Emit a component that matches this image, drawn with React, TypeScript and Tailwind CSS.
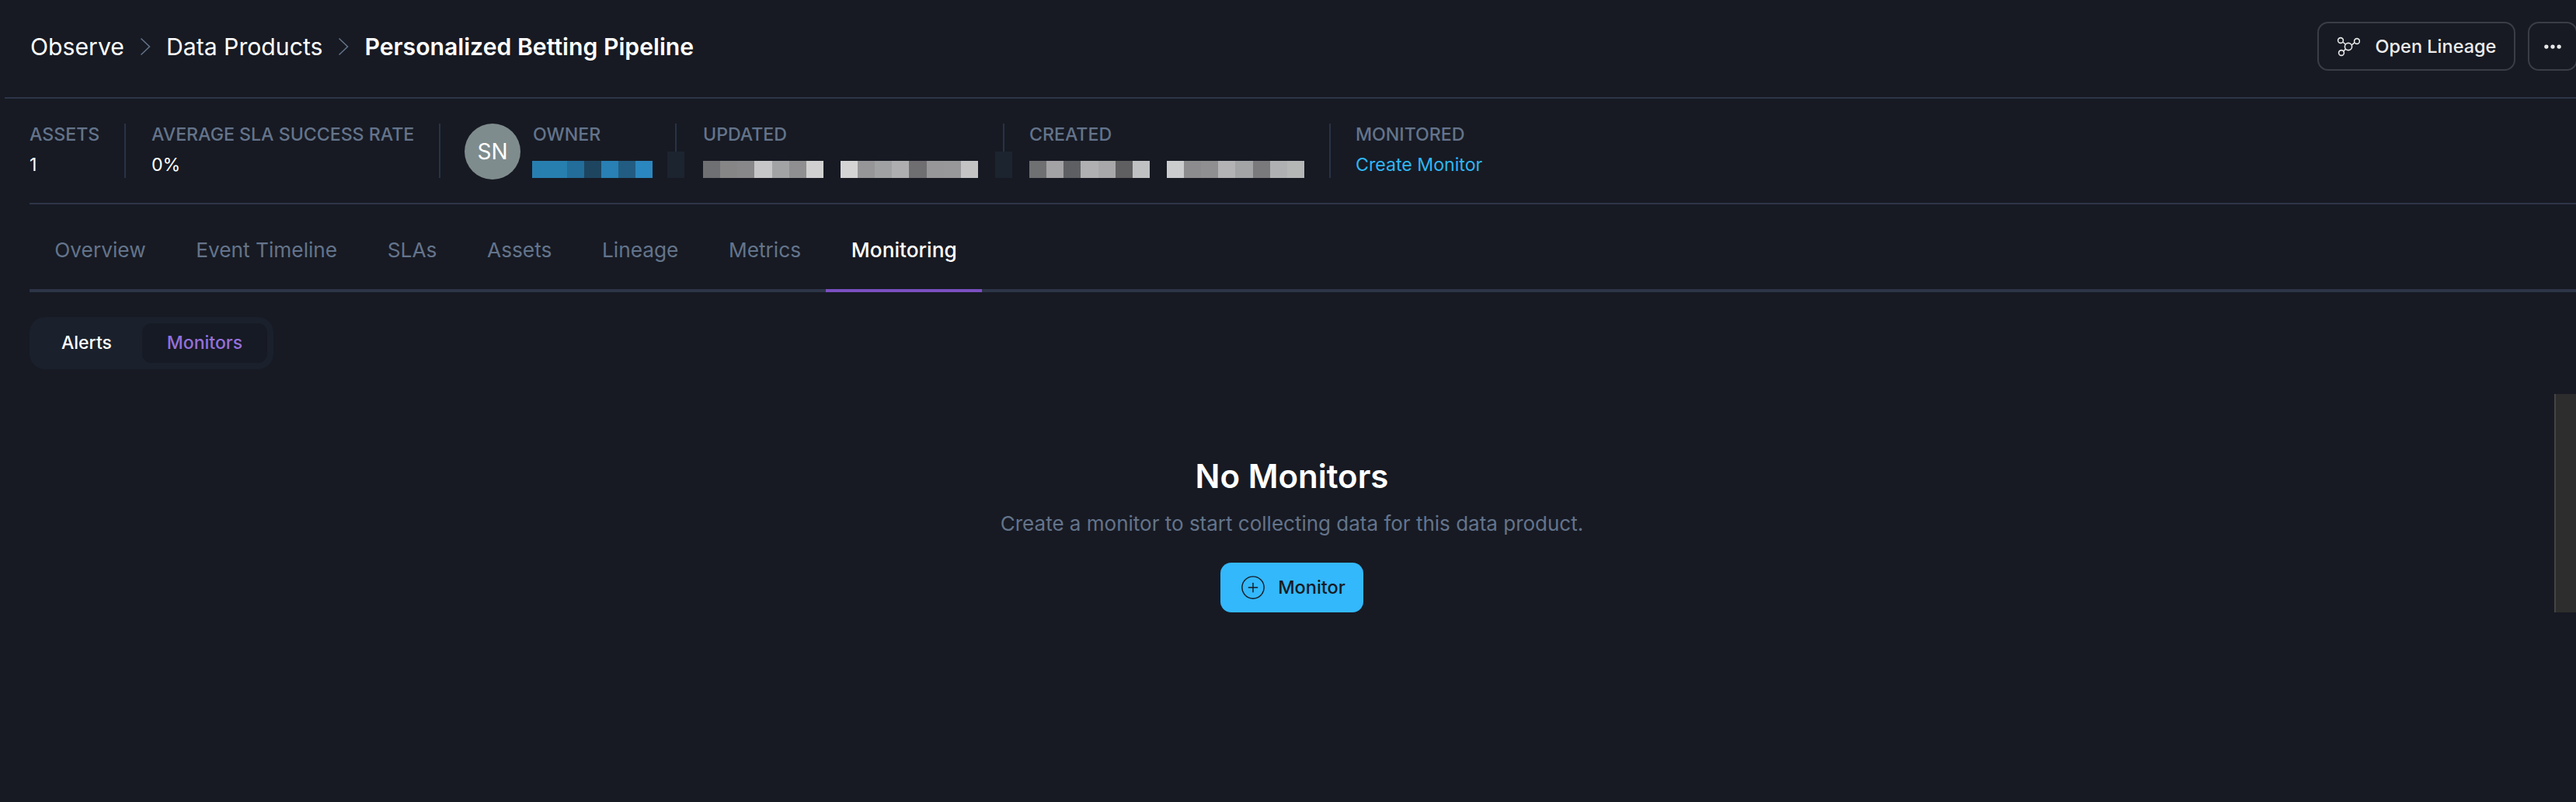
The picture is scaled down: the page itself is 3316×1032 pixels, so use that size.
import { CirclePlus, Ellipsis } from "lucide-react"

const ownerCells = ["w-[45px] bg-[#277fb0]", "w-[22px] bg-[#236d9a]", "w-[22px] bg-[#1d4560]", "w-[22px] bg-[#2880b4]", "w-[22px] bg-[#225c82]", "w-[22px] bg-[#2b87bf]"]
const updatedA = ["bg-[#6f7073]", "bg-[#868687]", "bg-[#88888a]", "bg-[#c6c6c8]", "bg-[#a2a3a5]", "bg-[#8f8f91]", "bg-[#d0d0d0]"]
const updatedB = ["bg-[#d4d4d5]", "bg-[#969698]", "bg-[#a0a1a3]", "bg-[#aeadaf]", "bg-[#6f6e71]", "bg-[#979799]", "bg-[#98989a]", "bg-[#c4c4c5]"]
const createdA = ["bg-[#6f7072]", "bg-[#a3a2a4]", "bg-[#5e5f62]", "bg-[#b0afb1]", "bg-[#a8a7a9]", "bg-[#5f5f61]", "bg-[#c0c1c3]"]
const createdB = ["bg-[#cbccce]", "bg-[#8c8c8e]", "bg-[#8f8e90]", "bg-[#b3b2b4]", "bg-[#a3a4a6]", "bg-[#7a7a7c]", "bg-[#afb0b2]", "bg-[#b5b6b6]"]
const tabs = ["Overview", "Event Timeline", "SLAs", "Assets", "Lineage", "Metrics"]

function Chevron() {
  return (
    <svg width="14" height="24" viewBox="0 0 14 24" fill="none" className="shrink-0">
      <path d="M1.5 1.5 L12.5 12 L1.5 22.5" stroke="#64748b" strokeWidth="1.5" />
    </svg>
  )
}

function LineageIcon() {
  return (
    <svg width="30" height="26" viewBox="0 0 30 26" fill="none" stroke="#e8e8e8" strokeWidth="1.6" className="shrink-0">
      <circle cx="15" cy="13" r="4.6" />
      <circle cx="5" cy="5" r="3.4" />
      <circle cx="26" cy="6" r="3.4" />
      <circle cx="6" cy="21" r="3.4" />
      <path d="M7.7 7 L11.4 10 M23 7.6 L19.4 11 M8.5 19 L11.6 16.2" />
    </svg>
  )
}

function Blur({ cells }: { cells: string[] }) {
  return (
    <div className="flex h-[22px]">
      {cells.map((c, i) => (
        <div key={i} className={"h-full w-[22.14px] " + c} />
      ))}
    </div>
  )
}

function Label({ children }: { children: string }) {
  return <div className="text-[23.15px] leading-[28px] font-medium text-[#64748b]">{children}</div>
}

function Divider({ block }: { block?: boolean }) {
  return (
    <div className="relative w-[2px] shrink-0 bg-[#293245]">
      {block && <div className="absolute left-[-10px] bottom-0 h-[34px] w-[22px] bg-[#1c2430]" />}
    </div>
  )
}

export default function App() {
  return (
    <div className="relative h-[1032px] w-[3316px] overflow-hidden bg-[#171a23] [font-family:Inter,sans-serif] antialiased">
      {/* header */}
      <div className="ml-[6px] flex h-[127px] items-center justify-between border-b-2 border-[#2d3548] pb-[6px] pl-[33px]">
        <div className="flex items-center text-[30.2px] leading-[36px] text-white">
          <span>Observe</span>
          <span className="mx-[20px]"><Chevron /></span>
          <span>Data Products</span>
          <span className="mx-[20px]"><Chevron /></span>
          <span className="font-semibold">Personalized Betting Pipeline</span>
        </div>
        <div className="-mr-[2px] flex items-center gap-[16px]">
          <button className="flex h-[63px] w-[255px] items-center justify-center gap-[20px] rounded-[14px] border-2 border-[#3a3d45] text-[23.5px] font-medium text-[#ececec]">
            <LineageIcon />
            Open Lineage
          </button>
          <button className="flex h-[63px] w-[64px] items-center justify-center rounded-[14px] border-2 border-[#3a3d45] text-[#ececec]">
            <Ellipsis size={28} strokeWidth={2.5} />
          </button>
        </div>
      </div>

      {/* stats */}
      <div className="ml-[38px] flex h-[136px] items-center border-b-2 border-[#2d3548]">
        <div className="flex h-[70px]">
          <div className="w-[122px]">
            <Label>ASSETS</Label>
            <div className="mt-[10px] text-[23.15px] leading-[30px] text-white">1</div>
          </div>
          <Divider />
          <div className="w-[403px] pl-[33px]">
            <Label>AVERAGE SLA SUCCESS RATE</Label>
            <div className="mt-[10px] text-[23.15px] leading-[30px] text-white">0%</div>
          </div>
          <Divider />
          <div className="flex w-[302px] pl-[31px]">
            <div className="flex h-[72px] w-[72px] shrink-0 items-center justify-center rounded-full bg-[#7f8c8d] text-[28px] text-white">SN</div>
            <div className="ml-[15px]">
              <div className="pl-[1px]"><Label>OWNER</Label></div>
              <div className="mt-[20px] flex h-[22px]">
                {ownerCells.map((c, i) => (
                  <div key={i} className={"h-full " + c} />
                ))}
              </div>
            </div>
          </div>
          <Divider block />
          <div className="w-[420px] pl-[34px]">
            <Label>UPDATED</Label>
            <div className="mt-[20px] flex gap-[22px]">
              <Blur cells={updatedA} />
              <Blur cells={updatedB} />
            </div>
          </div>
          <Divider block />
          <div className="w-[418px] pl-[32px]">
            <Label>CREATED</Label>
            <div className="mt-[20px] flex gap-[22px]">
              <Blur cells={createdA} />
              <Blur cells={createdB} />
            </div>
          </div>
          <Divider />
          <div className="pl-[32px]">
            <Label>MONITORED</Label>
            <div className="mt-[10px] text-[23.15px] leading-[30px] text-[#2fb6f5]">Create Monitor</div>
          </div>
        </div>
      </div>

      {/* tabs */}
      <div className="ml-[38px] flex h-[113px] border-b-4 border-[#2d3548] text-[26.25px] text-[#64748b]">
        {tabs.map((t) => (
          <div key={t} className="flex items-center px-[32.3px] pt-[9px]">{t}</div>
        ))}
        <div className="-mb-[4px] flex items-center border-b-4 border-[#7a4fc0] px-[32.5px] pt-[9px] font-medium text-white">Monitoring</div>
      </div>

      {/* alerts / monitors switch */}
      <div className="ml-[38px] mt-[32px] flex h-[67px] w-[314px] items-center rounded-[20px] bg-[#1a212c] pl-[8px] pr-[8px] text-[23px] font-medium">
        <div className="w-[137px] pl-[33px] text-white">Alerts</div>
        <div className="flex h-[51px] w-[161px] items-center justify-center rounded-[12px] bg-[#161a24] text-[#9370db]">Monitors</div>
      </div>

      {/* empty state */}
      <div className="ml-[38px] mr-[28px] mt-[114px] flex flex-col items-center">
        <div className="text-[42px] leading-[48px] font-semibold text-white">No Monitors</div>
        <div className="mt-[19px] text-[26px] leading-[36px] text-[#64748b]">Create a monitor to start collecting data for this data product.</div>
        <button className="mt-[32px] flex h-[64px] w-[184px] items-center justify-center gap-[15px] rounded-[14px] bg-[#33b8fc] pl-[2px] text-[23.5px] font-medium text-[#171a23]">
          <CirclePlus size={34} strokeWidth={1} />
          Monitor
        </button>
      </div>

      {/* scrollbar */}
      <div className="absolute right-0 top-[507px] h-[281px] w-[28px] border-l-2 border-[#444444] bg-[#2d2d2d]" />
    </div>
  )
}
